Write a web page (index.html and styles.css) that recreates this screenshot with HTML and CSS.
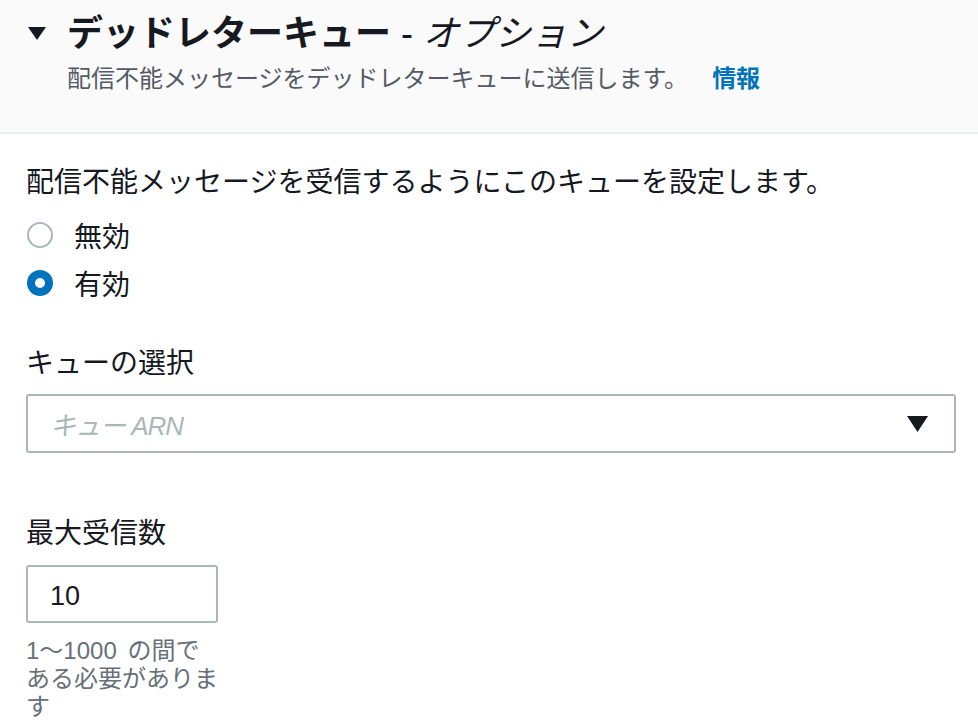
FILE: index.html
```html
<!DOCTYPE html>
<html lang="ja">
<head>
<meta charset="utf-8">
<link rel="stylesheet" href="styles.css">
</head>
<body>
<section class="panel">
  <header class="panel-header">
    <div class="title-row">
      <svg class="caret" width="18" height="14" viewBox="0 0 18 14"><polygon points="0,0 18,0 9,13" fill="#16191f"/></svg>
      <h2 class="title"><span class="title-main">デッドレターキュー</span> - <i class="title-opt">オプション</i></h2>
    </div>
    <p class="subtitle">配信不能メッセージをデッドレターキューに送信します。<a class="info" href="#">情報</a></p>
  </header>
  <div class="panel-body">
    <p class="label">配信不能メッセージを受信するようにこのキューを設定します。</p>
    <div class="radios">
      <label class="radio"><span class="dot"></span><span class="radio-text">無効</span></label>
      <label class="radio"><span class="dot checked"></span><span class="radio-text">有効</span></label>
    </div>
    <p class="label field-label">キューの選択</p>
    <div class="select">
      <span class="placeholder">キュー ARN</span>
      <svg class="select-caret" width="21" height="16" viewBox="0 0 21 16"><polygon points="0,0 21,0 10.5,16" fill="#16191f"/></svg>
    </div>
    <p class="label field-label second">最大受信数</p>
    <div class="input">10</div>
    <p class="help">1〜1000 の間である必要があります</p>
  </div>
</section>
</body>
</html>
```
FILE: styles.css
```css
html, body {
  margin: 0;
  padding: 0;
  background: #ffffff;
}
body {
  font-family: "Liberation Sans", "Noto Sans CJK JP", sans-serif;
  color: #16191f;
}
.panel-header {
  background: #fafafa;
  border-bottom: 2px solid #eaeded;
  padding: 12px 0 36px 28px;
  height: 84px;
}
.title-row {
  display: flex;
  align-items: center;
  height: 44px;
}
.caret {
  display: block;
  margin-right: 21px;
}
.title {
  margin: 0;
  font-size: 36px;
  line-height: 44px;
  font-weight: 400;
  white-space: nowrap;
}
.title-main {
  font-weight: 700;
}
.title-opt {
  font-style: italic;
}
.subtitle {
  margin: 6px 0 0 39px;
  font-size: 24px;
  line-height: 34px;
  color: #545b64;
  white-space: nowrap;
}
.info {
  margin-left: 24px;
  color: #0073bb;
  font-weight: 700;
  text-decoration: none;
}
.panel-body {
  padding: 31px 0 0 26px;
}
.label {
  margin: 0;
  font-size: 28px;
  line-height: 36px;
  white-space: nowrap;
}
.radios {
  margin-top: 10px;
}
.radio {
  display: flex;
  align-items: center;
  height: 48px;
  font-size: 28px;
}
.dot {
  box-sizing: border-box;
  width: 26px;
  height: 26px;
  border-radius: 50%;
  border: 2px solid #aab7b8;
  margin-left: 1px;
  margin-right: 21px;
}
.dot.checked {
  border: 8px solid #0073bb;
  background: #ffffff;
}
.field-label {
  margin-top: 39px;
}
.select {
  box-sizing: border-box;
  margin-top: 12px;
  width: 930px;
  height: 59px;
  border: 2px solid #aab7b8;
  border-radius: 3px;
  display: flex;
  align-items: center;
  justify-content: space-between;
  padding: 0 26px 0 22px;
}
.placeholder {
  font-size: 26px;
  font-style: italic;
  color: #aab7b8;
  letter-spacing: -1px;
}
.field-label.second {
  margin-top: 63px;
}
.input {
  box-sizing: border-box;
  margin-top: 13px;
  width: 192px;
  height: 58px;
  border: 2px solid #aab7b8;
  border-radius: 3px;
  display: flex;
  align-items: center;
  padding: 4px 0 0 22px;
  font-size: 27px;
}
.help {
  margin: 14px 0 0;
  width: 193px;
  font-size: 24px;
  line-height: 28px;
  word-spacing: 4px;
  color: #687078;
}
```
